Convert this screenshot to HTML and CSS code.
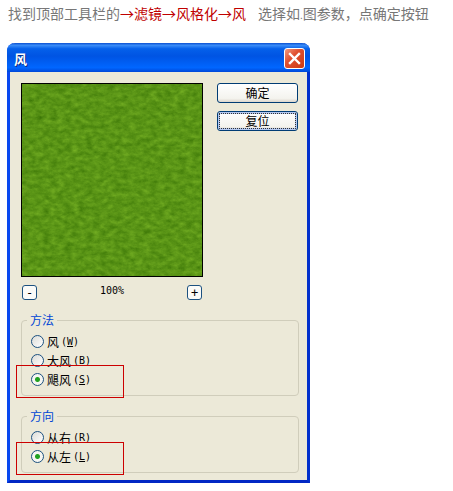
FILE: index.html
```
<!DOCTYPE html>
<html lang="zh-CN">
<head>
  <meta charset="UTF-8">
  <meta name="viewport" content="width=device-width, initial-scale=1.0">
  <title>风</title>
  <link rel="stylesheet" href="styles.css">
</head>
<body>
  <p class="step">找到顶部工具栏的<strong>→滤镜→风格化→风</strong><span class="note">选择如<small>.</small>图参数，点确定按钮</span></p>

  <form class="window">
    <header class="titlebar">
      <h1>风</h1>
      <button type="button" class="close" aria-label="关闭">
        <svg viewBox="0 0 17 17" width="17" height="17"><path d="M4 4l9 9M13 4l-9 9" stroke="#fff" stroke-width="2.4" stroke-linecap="square"/></svg>
      </button>
    </header>

    <div class="content">
      <div class="top">
        <div class="preview">
          <svg class="grass" width="100%" height="100%">
            <filter id="grass" x="0" y="0" width="100%" height="100%" color-interpolation-filters="sRGB">
              <feTurbulence type="fractalNoise" baseFrequency="0.14 0.22" numOctaves="5" seed="8"/>
              <feColorMatrix values="0.2 0.1 0 0 0.2  0.2 0.1 0 0 0.43  0.1 0.05 0 0 0.01  0 0 0 0 1"/>
            </filter>
            <rect width="100%" height="100%" filter="url(#grass)"/>
          </svg>
          <div class="zoom">
            <button type="button" aria-label="缩小">-</button>
            <span>100%</span>
            <button type="button" aria-label="放大">+</button>
          </div>
        </div>
        <div class="actions">
          <button type="submit">确定</button>
          <button type="reset" class="focused">复位</button>
        </div>
      </div>

      <fieldset>
        <legend>方法</legend>
        <label><input type="radio" name="method">风<span class="key">(<u>W</u>)</span></label>
        <label><input type="radio" name="method">大风<span class="key">(<u>B</u>)</span></label>
        <label class="marked"><input type="radio" name="method" checked>飓风<span class="key">(<u>S</u>)</span></label>
      </fieldset>

      <fieldset>
        <legend>方向</legend>
        <label><input type="radio" name="direction">从右<span class="key">(<u>R</u>)</span></label>
        <label class="marked"><input type="radio" name="direction" checked>从左<span class="key">(<u>L</u>)</span></label>
      </fieldset>
    </div>
  </form>
</body>
</html>
```
FILE: styles.css
```
*,
*::before {
  box-sizing: border-box;
}

body {
  margin: 0;
  padding: 3px 7px 8px;
  background: #fff;
  font-family: "Noto Sans CJK SC", sans-serif;
  font-size: 12px;
  color: #000;
}

button {
  padding: 0;
  font-family: inherit;
  font-size: 12px;
  color: #000;
}

.step {
  margin: 0 0 20px;
  padding-left: 1px;
  font-size: 14px;
  line-height: 20px;
  color: #777;
  white-space: nowrap;
}

.step strong {
  font-weight: normal;
  color: #c00000;
}

.step small {
  font-size: 10px;
  line-height: 1;
}

.note {
  margin-left: 12px;
}

/* window frame */
.window {
  max-width: 303px;
  border: 3px solid #0848f0;
  border-top: 0;
  border-right-color: #0230cc;
  border-bottom-color: #0228c4;
  border-radius: 8px 8px 0 0;
  background: #ece9d8;
}

.titlebar {
  display: flex;
  align-items: center;
  justify-content: space-between;
  height: 29px;
  margin: 0 -3px;
  padding: 2px 5px 0 7px;
  border-radius: 8px 8px 0 0;
  background: linear-gradient(#0a4fd0, #3a8cf8 8%, #0560ea 20%, #0054e3 45%, #0066ff 85%, #0048d8);
}

.titlebar h1 {
  margin: 0;
  font-size: 13px;
  line-height: 20px;
  color: #fff;
  text-shadow: 1px 1px #0a2a80;
}

.close {
  display: flex;
  align-items: center;
  justify-content: center;
  width: 21px;
  height: 21px;
  border: 1px solid #fff;
  border-radius: 3px;
  background: linear-gradient(135deg, #f09a80, #e05030 40%, #cc3a14);
}

.content {
  padding: 11px 8px 7px 11px;
}

.top {
  display: flex;
  gap: 14px;
}

.preview {
  flex: 0 1 182px;
}

.grass {
  display: block;
  height: 194px;
  border: 1px solid #000;
}

.zoom {
  display: flex;
  align-items: center;
  justify-content: space-between;
  padding: 8px 1px 0;
  font-family: "DejaVu Sans Mono", monospace;
  font-size: 10px;
  line-height: 12px;
}

.zoom span {
  padding-bottom: 3px;
}

.zoom button {
  width: 15px;
  height: 15px;
  border: 1px solid #1c5180;
  border-radius: 3px;
  background: #fbfbf8;
  font-family: inherit;
  line-height: 12px;
}

.actions {
  display: flex;
  flex: 1;
  flex-direction: column;
  gap: 8px;
  padding-right: 1px;
}

.actions button {
  height: 20px;
  border: 1px solid #003c74;
  border-radius: 3px;
  background: linear-gradient(#fff, #f4f3ee 80%, #dcd6cc);
  line-height: 16px;
}

.actions .focused {
  box-shadow: inset 0 0 0 2px #b4c8f0;
  outline: 1px dotted #333;
  outline-offset: -3px;
}

fieldset {
  min-width: 0;
  margin: 11px 0 0;
  padding: 3px 9px 6px;
  border: 1px solid #d0cdbb;
  border-radius: 4px;
}

legend {
  margin-left: -4px;
  padding: 0 3px;
  line-height: 18px;
  color: #0046d5;
}

label {
  display: flex;
  align-items: center;
  height: 19px;
  line-height: 17px;
}

input[type="radio"] {
  appearance: none;
  width: 13px;
  height: 13px;
  margin: 0 3px 0 0;
  border: 1px solid #1c5180;
  border-radius: 50%;
  background: linear-gradient(135deg, #dcdcd7, #fff);
}

input[type="radio"]:checked {
  background: radial-gradient(circle, #21a121 0 2px, #f6f6f2 3px);
}

.key {
  margin-left: 2px;
  font-family: "DejaVu Sans Mono", monospace;
  font-size: 10px;
}

/* red frame around the options to pick */
.marked {
  position: relative;
}

.marked::before {
  content: "";
  position: absolute;
  top: -5px;
  left: -15px;
  width: 108px;
  height: 33px;
  border: 1px solid #cc0000;
}
```
